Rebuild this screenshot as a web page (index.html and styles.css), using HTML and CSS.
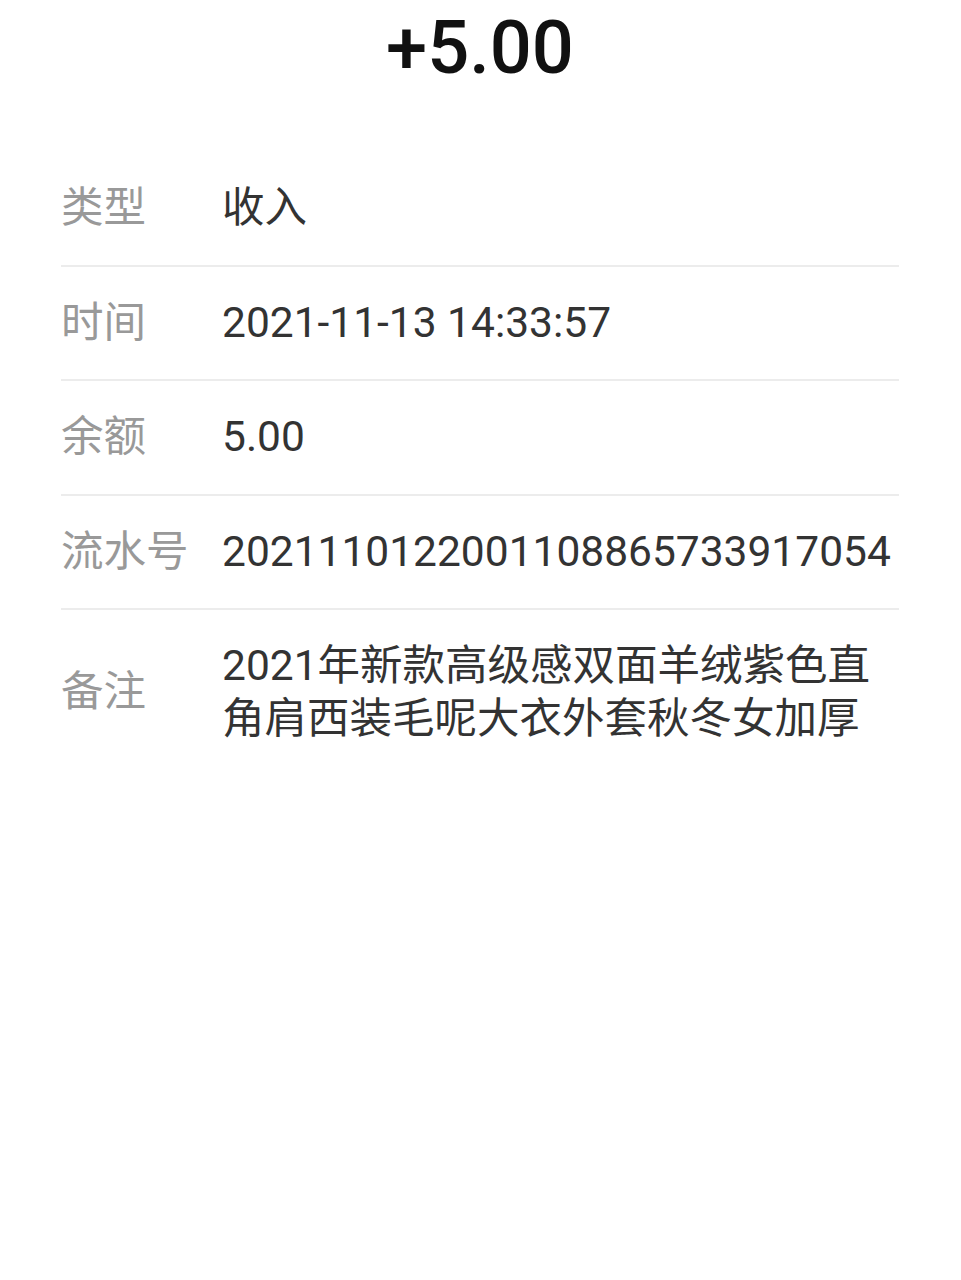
FILE: index.html
```html
<!DOCTYPE html>
<html lang="zh-CN">
<head>
    <meta charset="UTF-8">
    <meta name="viewport" content="width=device-width, initial-scale=1.0">
    <title>账单详情</title>
    <link rel="stylesheet" href="styles.css">
</head>
<body>

    <div class="container">
        <header>
            <h1 class="amount">+5.00</h1>
        </header>

        <main>
            <ul class="detail-list">
                <li class="detail-row">
                    <span class="detail-label">类型</span>
                    <span class="detail-value">收入</span>
                </li>
                <li class="detail-row">
                    <span class="detail-label">时间</span>
                    <span class="detail-value">2021-11-13 14:33:57</span>
                </li>
                <li class="detail-row">
                    <span class="detail-label">余额</span>
                    <span class="detail-value">5.00</span>
                </li>
                <li class="detail-row">
                    <span class="detail-label">流水号</span>
                    <span class="detail-value serial">2021110122001108865733917054</span>
                </li>
                <li class="detail-row remark">
                    <span class="detail-label">备注</span>
                    <span class="detail-value">2021年新款高级感双面羊绒紫色直角肩西装毛呢大衣外套秋冬女加厚</span>
                </li>
            </ul>
        </main>
    </div>

</body>
</html>
```

FILE: styles.css
```css
:root {
    --bg-color: #ffffff;
    --text-primary: #333333;
    --text-secondary: #999999;
    --amount-color: #111111;
    --divider: #ececec;
}

*, *::before, *::after {
    box-sizing: border-box;
    margin: 0;
    padding: 0;
}

body {
    font-family: Roboto, "Noto Sans CJK SC", sans-serif;
    background-color: var(--bg-color);
    color: var(--text-primary);
    min-height: 100vh;
}

.container {
    width: 100%;
    padding: 10px 62px 0 61px;
}

header {
    text-align: center;
    margin-bottom: 66px;
}

.amount {
    font-size: 74px;
    font-weight: 500;
    line-height: 76px;
    color: var(--amount-color);
}

.detail-list {
    list-style: none;
}

.detail-row {
    display: flex;
    align-items: center;
    padding: 30px 0;
    border-bottom: 2px solid var(--divider);
    font-size: 42.5px;
    line-height: 52.5px;
}

.detail-row:last-child {
    border-bottom: none;
}

.detail-label {
    flex: 0 0 161px;
    color: var(--text-secondary);
}

.detail-value {
    flex: 1;
    color: var(--text-primary);
    min-width: 0;
}

/* long number, keep it on one line */
.serial {
    white-space: nowrap;
}

.remark .detail-value {
    padding-right: 20px;
}
```
